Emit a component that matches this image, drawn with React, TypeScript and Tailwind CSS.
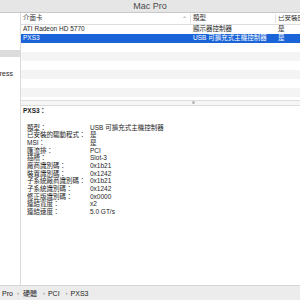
const rows: { name: string; type: string; driver: string }[] = [
  { name: "ATI Radeon HD 5770", type: "顯示器控制器", driver: "是" },
  { name: "PXS3", type: "USB 可擴充式主機控制器", driver: "是" },
];

const details: [string, string][] = [
  ["類型：", "USB 可擴充式主機控制器"],
  ["已安裝的驅動程式：", "是"],
  ["MSI：", "是"],
  ["匯流排：", "PCI"],
  ["插槽：", "Slot-3"],
  ["廠商識別碼：", "0x1b21"],
  ["裝置識別碼：", "0x1242"],
  ["子系統廠商識別碼：", "0x1b21"],
  ["子系統識別碼：", "0x1242"],
  ["修正版識別碼：", "0x0000"],
  ["連結寬度：", "x2"],
  ["連結速度：", "5.0 GT/s"],
];

export default function App() {
  return (
    <div
      className="w-[300px] h-[300px] flex flex-col overflow-hidden bg-white text-[#1e1e1e]"
      style={{ fontFamily: '"Liberation Sans", "Noto Sans CJK TC", sans-serif' }}
    >
      {/* Title bar */}
      <div className="h-[13px] shrink-0 bg-[#e6e6e6] border-b border-[#c9c9c9] flex items-center justify-center text-[9px] leading-none text-[#4a4a4a]">
        Mac Pro
      </div>

      <div className="flex-1 flex min-h-0">
        {/* Sidebar */}
        <aside className="w-[21px] shrink-0 border-r border-[#dadada] flex flex-col text-[7px] leading-none">
          <div className="h-[37px]" />
          <div className="h-[7px] bg-[#dcdcdc]" />
          <div className="h-[12px]" />
          <div className="h-[8px] flex items-center justify-end overflow-hidden whitespace-nowrap pr-[7px]">
            PCI Express
          </div>
        </aside>

        {/* Right pane */}
        <main className="flex-1 flex flex-col min-w-0">
          {/* Table */}
          <div className="h-[87px] shrink-0 flex flex-col overflow-hidden text-[6.5px] leading-none">
            <div className="h-[12px] shrink-0 border-b border-[#dedede] flex items-center whitespace-nowrap text-[#333]">
              <div className="w-[170px] shrink-0 pl-[2px] flex items-center justify-between pr-[3px] border-r border-[#e2e2e2] h-[9px]">
                <span>介面卡</span>
                <span className="text-[6px] text-[#888]">⌃</span>
              </div>
              <div className="w-[85px] shrink-0 pl-[2px] border-r border-[#e2e2e2] h-[9px] flex items-center">類型</div>
              <div className="pl-[2px] overflow-hidden">已安裝的驅動程式</div>
            </div>
            {rows.map((r, i) => (
              <div
                key={r.name}
                className={
                  i === 1
                    ? "h-[9px] shrink-0 flex items-center whitespace-nowrap bg-[#1b64d8] text-white"
                    : "h-[9px] shrink-0 flex items-center whitespace-nowrap"
                }
              >
                <div className="w-[170px] shrink-0 pl-[2px]">{r.name}</div>
                <div className="w-[85px] shrink-0 pl-[2px]">{r.type}</div>
                <div className="pl-[2px]">{r.driver}</div>
              </div>
            ))}
            {[0, 1, 2, 3, 4, 5].map((i) => (
              <div
                key={i}
                className={i % 2 === 0 ? "h-[9px] shrink-0 bg-white" : "h-[9px] shrink-0 bg-[#f4f4f4]"}
              />
            ))}
          </div>

          {/* Splitter */}
          <div className="h-[6px] shrink-0 bg-[#f6f6f6] border-y border-[#dcdcdc] relative">
            <div className="absolute left-[171px] top-[0px] w-[3px] h-[3px] rounded-full bg-[#b8b8b8]" />
          </div>

          {/* Details */}
          <section className="flex-1 min-h-0 pl-[2px] pt-[1px] text-[6.5px] leading-none">
            <div className="h-[8px] flex items-center font-bold">PXS3：</div>
            <div className="mt-[9px] flex flex-col pl-[4px]">
              {details.map(([k, v]) => (
                <div key={k} className="h-[7.7px] flex items-center whitespace-nowrap">
                  <div className="w-[63px] shrink-0">{k}</div>
                  <div>{v}</div>
                </div>
              ))}
            </div>
          </section>
        </main>
      </div>

      {/* Path bar */}
      <div className="h-[15px] shrink-0 bg-[#ececec] border-t border-[#d6d6d6] flex items-center pl-[2px] text-[7px] leading-none whitespace-nowrap text-[#222]">
        <span>Pro</span>
        <span className="mx-[4px] text-[6px] text-[#777]">›</span>
        <span>硬體</span>
        <span className="ml-[6px] mr-[3px] text-[6px] text-[#777]">›</span>
        <span>PCI</span>
        <span className="ml-[6px] mr-[3px] text-[6px] text-[#777]">›</span>
        <span>PXS3</span>
      </div>
    </div>
  );
}
